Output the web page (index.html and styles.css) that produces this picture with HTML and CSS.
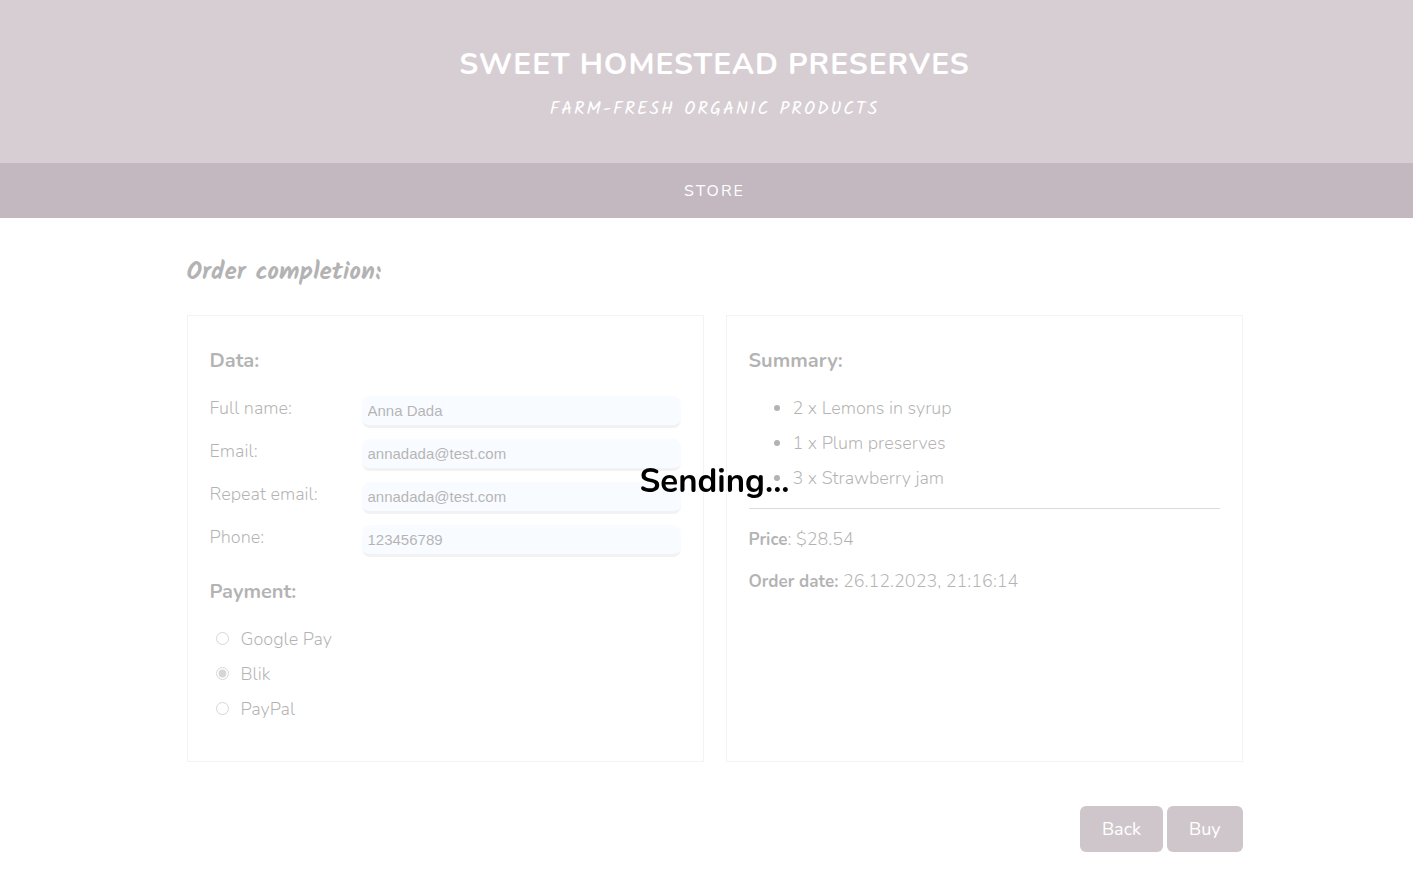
FILE: index.html
```html
<!DOCTYPE html>
<html lang="en">
<head>
<meta charset="utf-8">
<title>Sweet Homestead Preserves</title>
<link rel="stylesheet" href="styles.css">
</head>
<body>
<header class="header">
  <h1 class="header-title">Sweet Homestead Preserves</h1>
  <p class="header-tagline">Farm-fresh organic products</p>
</header>
<nav class="nav"><a class="nav-link" href="#store">Store</a></nav>
<main class="main">
  <h2 class="page-title">Order completion:</h2>
  <form class="order">
    <div class="cards">
      <section class="card">
        <h3 class="card-title">Data:</h3>
        <div class="fields">
          <label class="field-label" for="name">Full name:</label>
          <input class="field-input" id="name" type="text" value="Anna Dada">
          <label class="field-label" for="email">Email:</label>
          <input class="field-input" id="email" type="email" value="annadada@test.com">
          <label class="field-label" for="email2">Repeat email:</label>
          <input class="field-input" id="email2" type="email" value="annadada@test.com">
          <label class="field-label" for="phone">Phone:</label>
          <input class="field-input" id="phone" type="tel" value="123456789">
        </div>
        <h3 class="card-title">Payment:</h3>
        <div class="options">
          <label class="option"><input class="radio" type="radio" name="payment">Google Pay</label>
          <label class="option"><input class="radio" type="radio" name="payment" checked>Blik</label>
          <label class="option"><input class="radio" type="radio" name="payment">PayPal</label>
        </div>
      </section>
      <section class="card">
        <h3 class="card-title">Summary:</h3>
        <ul class="items">
          <li>2 x Lemons in syrup</li>
          <li>1 x Plum preserves</li>
          <li>3 x Strawberry jam</li>
        </ul>
        <hr class="divider">
        <p class="total"><b>Price</b>: $28.54</p>
        <p class="total"><b>Order date:</b> 26.12.2023, 21:16:14</p>
      </section>
    </div>
    <div class="actions">
      <button class="button" type="button">Back</button>
      <button class="button" type="submit">Buy</button>
    </div>
  </form>
</main>
<div class="overlay" role="status">Sending...</div>
</body>
</html>
```

FILE: styles.css
```css
* { box-sizing: border-box; }
body {
  margin: 0;
  background: #fff;
  color: #000;
  font: 300 18px/35px Nunito, Lato, sans-serif;
}
h1, h2, h3, p, ul { margin: 0; }
b { font-size: 17px; font-weight: 700; }
.header {
  padding: 43px 0 36px 16px;
  background: #7a5c6c;
  color: #fff;
  text-align: center;
  text-transform: uppercase;
}
.header-title { font-size: 30px; line-height: 44px; letter-spacing: 1px; }
.header-tagline {
  padding-top: 5px;
  font: 18px/35px Kalam, Lato, sans-serif;
  letter-spacing: 2px;
}
.nav {
  padding: 11px 0 9px 16px;
  background: #3a122d;
  text-align: center;
}
.nav-link {
  display: block;
  color: #fff;
  font-size: 16px;
  font-weight: 400;
  letter-spacing: 2px;
  text-decoration: none;
  text-transform: uppercase;
}
.main { padding: 32px 0 19px 16px; }
.page-title {
  max-width: 1056px;
  margin: 0 auto 21px;
  font: bold 25px/44px Kalam, Lato, sans-serif;
}
.order { max-width: 1056px; margin: 0 auto; }
.cards { display: grid; grid-template-columns: 1fr 1fr; gap: 22px; }
.card { padding: 23px 22px 22px; border: 1px solid #d8d8d8; min-height: 447px; }
.card-title { font-size: 20px; line-height: 44px; padding-bottom: 8px; }
.fields {
  display: grid;
  grid-template-columns: 152px 1fr;
  row-gap: 6px;
  margin-bottom: 13px;
}
.field-input {
  width: 100%;
  height: 32px;
  margin-top: 5px;
  padding: 2px 6px;
  border: 0;
  border-bottom: 3px solid #d4d4d4;
  border-radius: 8px;
  background: #e8f0fe;
  color: #000;
  font: 15px "Liberation Sans", Arial, sans-serif;
}
.options { display: grid; padding-left: 6px; }
.option { display: flex; align-items: center; gap: 12px; }
.radio { width: 13px; height: 13px; margin: 0 0 3px; accent-color: #767676; }
.items { padding-left: 44px; }
.divider { margin: 12px 0 13px; border: 0; border-top: 1px solid #888; }
.total { margin-bottom: 7px; }
.actions {
  display: flex;
  justify-content: flex-end;
  gap: 4px;
  margin-top: 44px;
}
.button {
  padding: 0 22px;
  border: 0;
  border-radius: 6px;
  background: #5f4152;
  color: #fff;
  font: 18px/46px Nunito, Lato, sans-serif;
}
.overlay {
  position: fixed;
  inset: 0;
  display: flex;
  align-items: center;
  justify-content: center;
  padding: 92px 0 0 16px;
  background: rgba(255, 255, 255, 0.7);
  font-size: 33px;
  font-weight: 700;
}
```
